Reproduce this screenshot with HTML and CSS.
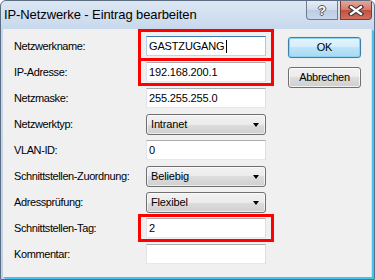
FILE: index.html
```html
<!DOCTYPE html>
<html lang="de">
<head>
	<meta charset="UTF-8">
	<title>IP-Netzwerke - Eintrag bearbeiten</title>
	<link rel="stylesheet" href="styles.css">
</head>
<body>
<div class="window">
	<div class="titlebar">
		<span class="title">IP-Netzwerke - Eintrag bearbeiten</span>
		<div class="caption">
			<span class="cbtn help">?</span>
			<span class="cbtn close">
				<svg width="16" height="11" viewBox="0 0 16 11">
					<path d="M3 2 L13 9 M13 2 L3 9" stroke="#3a3a3a" stroke-width="4.5" stroke-linecap="square" fill="none"/>
					<path d="M3 2 L13 9 M13 2 L3 9" stroke="#fff" stroke-width="2.2" stroke-linecap="square" fill="none"/>
				</svg>
			</span>
		</div>
	</div>
	<div class="client">
		<div class="form">
			<label>Netzwerkname:</label>
			<div class="edit focus">GASTZUGANG<span class="caret"></span></div>

			<label>IP-Adresse:</label>
			<div class="edit">192.168.200.1</div>

			<label>Netzmaske:</label>
			<div class="edit">255.255.255.0</div>

			<label>Netzwerktyp:</label>
			<div class="combo">Intranet<span class="arrow"></span></div>

			<label>VLAN-ID:</label>
			<div class="edit">0</div>

			<label>Schnittstellen-Zuordnung:</label>
			<div class="combo">Beliebig<span class="arrow"></span></div>

			<label>Adressprüfung:</label>
			<div class="combo">Flexibel<span class="arrow"></span></div>

			<label>Schnittstellen-Tag:</label>
			<div class="edit">2</div>

			<label>Kommentar:</label>
			<div class="edit"></div>
		</div>
		<div class="buttons">
			<div class="btn default">OK</div>
			<div class="btn">Abbrechen</div>
		</div>

		<div class="mark mark-name"></div>
		<div class="mark mark-ip"></div>
		<div class="mark mark-tag"></div>
	</div>
</div>
</body>
</html>
```

FILE: styles.css
```css
*{margin:0;padding:0;box-sizing:border-box;}
body{
	font-family:"Liberation Sans", Arial, sans-serif;
	font-size:11px;
	color:#000;
	background:#fff;
}
.window{
	width:375px;
	height:280px;
	border:1px solid #5e6e82;
	border-radius:6px 6px 0 0;
	background:linear-gradient(#dce7f4, #c8d8ec 28px, #bfd1e8);
	display:flex;
	flex-direction:column;
	overflow:hidden;
}
.titlebar{
	height:28px;
	display:flex;
	align-items:flex-start;
}
.title{
	font-size:13px;
	line-height:15px;
	padding:6px 0 0 3px;
	letter-spacing:-0.1px;
	color:#000;
}
.caption{
	margin-left:auto;
	margin-right:2px;
	display:flex;
	gap:2px;
}
.cbtn{
	width:32px;
	height:19px;
	border:1px solid #6c7b8f;
	border-top:0;
	display:flex;
	align-items:center;
	justify-content:center;
}
.help{
	border-radius:0 0 0 4px;
	background:linear-gradient(#e4ecf6, #cfdcec 50%, #bccde3 50%, #c8d7ea);
	color:#fff;
	font-weight:bold;
	font-size:13px;
	text-shadow:1px 0 #4a5564, -1px 0 #4a5564, 0 1px #4a5564, 0 -1px #4a5564;
}
.close{
	border-radius:0 0 4px 0;
	border-color:#7a3b33;
	background:linear-gradient(#e4a79a, #d4786a 50%, #c24f3c 50%, #d0705e);
}

.client{
	position:relative;
	flex:1;
	margin:0 2px 2px 2px;
	background:#f0f0f0;
	border-right:1px solid #dcdcdc;
	box-shadow:1px 1px 0 #43c3ee, 2px 2px 0 #43c3ee;
	display:flex;
	padding:7px 0 0 11px;
}
.form{
	display:grid;
	grid-template-columns:132px 120px;
	grid-auto-rows:20px;
	row-gap:6px;
	align-items:center;
}
.form label{
	letter-spacing:-0.4px;
}
.edit{
	height:20px;
	background:#fff;
	border:1px solid;
	border-color:#abadb3 #dbdfe6 #e3e9ef #e2e3ea;
	padding:0 0 0 2px;
	line-height:18px;
	letter-spacing:-0.15px;
	display:flex;
	align-items:center;
}
.edit.focus{
	border-color:#3d7bad #a4c9e3 #b7d9ed #b5cfe7;
}
.caret{
	display:inline-block;
	width:1px;
	height:13px;
	background:#000;
	margin-left:1px;
}
.combo{
	position:relative;
	height:21px;
	border:1px solid #707070;
	border-radius:3px;
	background:linear-gradient(#f2f2f2, #ebebeb 50%, #dddddd 50%, #cfcfcf);
	box-shadow:inset 0 0 0 1px rgba(255,255,255,0.6);
	padding-left:4px;
	line-height:19px;
	letter-spacing:-0.15px;
}
.arrow{
	position:absolute;
	right:6px;
	top:8px;
	width:0;
	height:0;
	border-left:3.5px solid transparent;
	border-right:3.5px solid transparent;
	border-top:4px solid #000;
}
.buttons{
	margin-left:22px;
	padding-top:1px;
	display:flex;
	flex-direction:column;
	gap:9px;
}
.btn{
	width:73px;
	height:21px;
	border:1px solid #707070;
	border-radius:3px;
	background:linear-gradient(#f2f2f2, #ebebeb 50%, #dddddd 50%, #cfcfcf);
	box-shadow:inset 0 0 0 1px rgba(255,255,255,0.7);
	text-align:center;
	line-height:19px;
	font-size:11px;
	letter-spacing:-0.3px;
}
.btn.default{
	border-color:#3c7fb1;
	background:linear-gradient(#e5f4fc, #d3edfb 50%, #bde4f8 50%, #a9d9f2);
	box-shadow:inset 0 0 0 1px #8ed2f2, 0 0 1px #7ec6f0;
}
.mark{
	position:absolute;
	left:135px;
	width:136px;
	border:3px solid #ff0000;
}
.mark-name{top:0;height:32px;}
.mark-ip{top:29px;height:28px;}
.mark-tag{top:185px;height:28px;}
```
